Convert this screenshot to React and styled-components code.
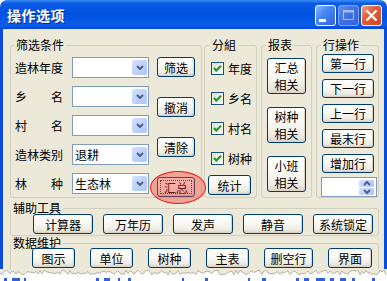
import styled, { createGlobalStyle } from "styled-components";

const Global = createGlobalStyle`
  html, body { margin: 0; padding: 0; background: #fff; }
  body { font-family: "Noto Sans CJK SC", "Liberation Sans", sans-serif; font-size: 12px; }
  * { box-sizing: border-box; }
`;

const FONT = `"Noto Sans CJK SC", "Liberation Sans", sans-serif`;

const S = {
  Window: styled.div`
    width: 387px;
    height: 281px;
    display: flex;
    flex-direction: column;
    overflow: hidden;
  `,
  TitleBar: styled.div`
    height: 29px;
    flex: none;
    display: flex;
    align-items: center;
    padding: 0 5px 0 7px;
    border-radius: 7px 7px 0 0;
    background: linear-gradient(180deg, #3D8BF7 0%, #0A5BE6 12%, #0053E0 50%, #0A5CEA 88%, #0046D0 100%);
  `,
  Title: styled.span`
    flex: 1;
    color: #fff;
    font-weight: bold;
    font-size: 14px;
    letter-spacing: 0.5px;
    text-shadow: 1px 1px 0 #0B2A8A;
    margin-top: 1px;
  `,
  Controls: styled.div`
    display: flex;
    gap: 2px;
    margin-top: 2px;
  `,
  Ctrl: styled.div`
    width: 21px;
    height: 21px;
    border-radius: 3px;
    display: flex;
    align-items: center;
    justify-content: center;
    border: 1px solid ${(p) => (p.$kind === "max" ? "#7FA3EE" : "#fff")};
    background: ${(p) =>
      p.$kind === "close"
        ? "linear-gradient(135deg, #F0A28C 0%, #E0603C 40%, #CC4520 100%)"
        : p.$kind === "max"
        ? "linear-gradient(135deg, #5E8CEB 0%, #3B6BDD 60%, #3464D8 100%)"
        : "linear-gradient(135deg, #8DB5FB 0%, #4A86F3 40%, #2D63DF 100%)"};
  `,
  Body: styled.div`
    height: 240px;
    flex: none;
    display: flex;
    flex-direction: column;
    background: #ECE9D8;
    border-left: 3px solid #0A4BD8;
    border-right: 3px solid #0A4BD8;
    padding: 9px 5px 0 7px;
    overflow: hidden;
  `,
  TopRow: styled.div`
    display: flex;
    height: 160px;
  `,
  Group: styled.fieldset`
    margin: ${(p) => p.$mt || 0}px 0 0 ${(p) => p.$gap || 0}px;
    min-width: 0;
    width: ${(p) => p.$w}px;
    height: ${(p) => (p.$h ? `${p.$h}px` : "auto")};
    border: 1px solid #D0D0BF;
    border-radius: 3px;
    padding: ${(p) => p.$pt || 0}px 0 0 ${(p) => p.$pl}px;
    flex: none;
  `,
  Legend: styled.legend`
    padding: 0 2px;
    margin-left: ${(p) => p.$ml}px;
    line-height: 14px;
    font-size: 12px;
    color: #000;
  `,
  FilterBody: styled.div`
    display: flex;
    gap: 8px;
  `,
  Rows: styled.div`
    display: flex;
    flex-direction: column;
    gap: 8px;
  `,
  Row: styled.div`
    display: flex;
    align-items: center;
    height: 21px;
  `,
  Label: styled.span`
    width: 48px;
    margin-right: 9px;
    display: flex;
    justify-content: space-between;
    font-size: 12px;
  `,
  Combo: styled.div`
    width: 77px;
    height: 21px;
    border: 1px solid #7F9DB9;
    background: #fff;
    display: flex;
    align-items: center;
    padding: 0 1px 0 2px;
    font-size: 12px;
  `,
  ComboText: styled.span`
    flex: 1;
  `,
  DropBtn: styled.span`
    width: 15px;
    height: 15px;
    border-radius: 2px;
    display: flex;
    align-items: center;
    justify-content: center;
    background: linear-gradient(135deg, #D5E1FD 0%, #BCCFF9 60%, #AFC5F5 100%);
  `,
  BtnCol: styled.div`
    position: relative;
    display: flex;
    flex-direction: column;
    justify-content: space-between;
    height: 140px;
  `,
  Btn: styled.button`
    position: relative;
    width: ${(p) => p.$w}px;
    height: ${(p) => p.$h || 20}px;
    padding: 0;
    margin: 0;
    font-family: ${FONT};
    font-size: 12px;
    line-height: ${(p) => (p.$h > 30 ? 17 : 15)}px;
    color: #000;
    border: 1px solid #003C74;
    border-radius: 3px;
    background: linear-gradient(180deg, #FFFFFF 0%, #F9F8F4 45%, #EFEDE6 78%, #DCD7CC 100%);
    box-shadow: inset -1px -1px 0 #D8D1C4;
    display: flex;
    align-items: center;
    justify-content: center;
    text-align: center;
    flex: none;
  `,
  Focus: styled.span`
    position: absolute;
    inset: 2px;
    border: 1px dotted #333;
  `,
  Ring: styled.span`
    position: absolute;
    left: -8px;
    top: -7px;
    width: 56px;
    height: 33px;
    border-radius: 50%;
    border: 1px solid #F01818;
    background: rgba(240, 70, 60, 0.42);
    pointer-events: none;
    z-index: 2;
  `,
  CheckList: styled.div`
    display: flex;
    flex-direction: column;
    gap: 17px;
  `,
  CheckRow: styled.label`
    display: flex;
    align-items: center;
    gap: 4px;
    height: 13px;
    font-size: 12px;
  `,
  Box: styled.span`
    width: 13px;
    height: 13px;
    border: 1px solid #1C5180;
    background: linear-gradient(135deg, #DCDCD4 0%, #F4F4F0 60%, #FFFFFF 100%);
    display: flex;
    align-items: center;
    justify-content: center;
  `,
  Stat: styled.div`
    margin: 10px 0 0 -3px;
  `,
  Stack: styled.div`
    display: flex;
    flex-direction: column;
    gap: ${(p) => p.$gap}px;
    margin-top: ${(p) => p.$mt || 0}px;
  `,
  Spin: styled.div`
    width: 56px;
    height: 20px;
    margin-left: -1px;
    border: 1px solid #7F9DB9;
    background: #fff;
    display: flex;
    justify-content: flex-end;
    padding: 2px 2px 1px 0;
  `,
  SpinArrows: styled.div`
    width: 15px;
    display: flex;
    flex-direction: column;
    gap: 1px;
  `,
  SpinBtn: styled.span`
    flex: 1;
    border-radius: 1px;
    display: flex;
    align-items: center;
    justify-content: center;
    background: linear-gradient(135deg, #D5E1FD 0%, #BCCFF9 60%, #AFC5F5 100%);
  `,
  BtnRow: styled.div`
    display: flex;
    gap: ${(p) => p.$gap}px;
    margin-top: ${(p) => p.$mt}px;
  `,
  Torn: styled.svg`
    display: block;
    flex: none;
  `,
};

const Chevron = ({ up }) => (
  <svg width="8" height="5" viewBox="0 0 8 5">
    <path d={up ? "M1 4 L4 1 L7 4" : "M1 1 L4 4 L7 1"} fill="none" stroke="#4D6185" strokeWidth="2" />
  </svg>
);

const Check = () => (
  <svg width="9" height="9" viewBox="0 0 9 9">
    <path d="M1 4 L3.3 6.6 L8 1.8" fill="none" stroke="#21A121" strokeWidth="2.2" />
  </svg>
);

const Combo = ({ value }) => (
  <S.Combo>
    <S.ComboText>{value}</S.ComboText>
    <S.DropBtn>
      <Chevron />
    </S.DropBtn>
  </S.Combo>
);

const Spread = ({ a, b }) => (
  <S.Label>
    <span>{a}</span>
    <span>{b}</span>
  </S.Label>
);

const tornEdge = (() => {
  let seed = 11;
  const rnd = () => {
    seed = (seed * 9301 + 49297) % 233280;
    return seed / 233280;
  };
  const pts = [];
  for (let x = 0; x <= 387; x += 2) pts.push([x, 1 + rnd() * 5]);
  const line = pts.map(([x, y]) => `${x},${y.toFixed(1)}`).join(" ");
  return { line, poly: `0,0 ${line} 387,0` };
})();

const specks = [
  [4, 3], [12, 8], [24, 2], [96, 3], [104, 6], [118, 2], [128, 3], [182, 2],
  [205, 3], [248, 2], [262, 4], [296, 3], [304, 5], [316, 9], [330, 4], [340, 6], [352, 3], [372, 3],
];

export default function App() {
  return (
    <>
      <Global />
      <S.Window>
        <S.TitleBar>
          <S.Title>操作选项</S.Title>
          <S.Controls>
            <S.Ctrl $kind="min">
              <svg width="19" height="19" viewBox="0 0 19 19">
                <rect x="3" y="13" width="7" height="3" fill="#fff" />
              </svg>
            </S.Ctrl>
            <S.Ctrl $kind="max">
              <svg width="19" height="19" viewBox="0 0 19 19">
                <rect x="4.5" y="4.5" width="10" height="9" fill="none" stroke="#9DBBF4" strokeWidth="1" />
                <rect x="4" y="4" width="11" height="2.5" fill="#9DBBF4" />
              </svg>
            </S.Ctrl>
            <S.Ctrl $kind="close">
              <svg width="19" height="19" viewBox="0 0 19 19">
                <path d="M4.5 4.5 L14.5 14.5 M14.5 4.5 L4.5 14.5" stroke="#fff" strokeWidth="2.4" />
              </svg>
            </S.Ctrl>
          </S.Controls>
        </S.TitleBar>

        <S.Body>
          <S.TopRow>
            <S.Group $w={192} $pl={4} $pt={5}>
              <S.Legend $ml={-1}>筛选条件</S.Legend>
              <S.FilterBody>
                <S.Rows>
                  <S.Row>
                    <S.Label>造林年度</S.Label>
                    <Combo />
                  </S.Row>
                  <S.Row>
                    <Spread a="乡" b="名" />
                    <Combo />
                  </S.Row>
                  <S.Row>
                    <Spread a="村" b="名" />
                    <Combo />
                  </S.Row>
                  <S.Row>
                    <S.Label>造林类别</S.Label>
                    <Combo value="退耕" />
                  </S.Row>
                  <S.Row>
                    <Spread a="林" b="种" />
                    <Combo value="生态林" />
                  </S.Row>
                </S.Rows>
                <S.BtnCol>
                  <S.Btn $w={38}>筛选</S.Btn>
                  <S.Btn $w={38}>撤消</S.Btn>
                  <S.Btn $w={38}>清除</S.Btn>
                  <S.Btn $w={38}>
                    <S.Focus />
                    汇总
                    <S.Ring />
                  </S.Btn>
                </S.BtnCol>
              </S.FilterBody>
            </S.Group>

            <S.Group $w={53} $gap={2} $pl={6} $pt={10}>
              <S.Legend $ml={-1}>分組</S.Legend>
              <S.CheckList>
                {["年度", "乡名", "村名", "树种"].map((t) => (
                  <S.CheckRow key={t}>
                    <S.Box>
                      <Check />
                    </S.Box>
                    {t}
                  </S.CheckRow>
                ))}
              </S.CheckList>
              <S.Stat>
                <S.Btn $w={43}>统计</S.Btn>
              </S.Stat>
            </S.Group>

            <S.Group $w={51} $gap={4} $pl={5} $pt={6}>
              <S.Legend $ml={-1}>报表</S.Legend>
              <S.Stack $gap={13}>
                <S.Btn $w={39} $h={36}>汇总<br />相关</S.Btn>
                <S.Btn $w={39} $h={36}>树种<br />相关</S.Btn>
                <S.Btn $w={39} $h={36}>小班<br />相关</S.Btn>
              </S.Stack>
            </S.Group>

            <S.Group $w={63} $gap={4} $pl={5} $pt={2}>
              <S.Legend $ml={-1}>行操作</S.Legend>
              <S.Stack $gap={6}>
                {["第一行", "下一行", "上一行", "最末行", "增加行"].map((t) => (
                  <S.Btn key={t} $w={52} $h={19}>
                    {t}
                  </S.Btn>
                ))}
              </S.Stack>
              <S.Stack $gap={0} $mt={4}>
                <S.Spin>
                  <S.SpinArrows>
                    <S.SpinBtn>
                      <Chevron up />
                    </S.SpinBtn>
                    <S.SpinBtn>
                      <Chevron />
                    </S.SpinBtn>
                  </S.SpinArrows>
                </S.Spin>
              </S.Stack>
            </S.Group>
          </S.TopRow>

          <S.Group $w={369} $h={35} $pl={22} $mt={3}>
            <S.Legend $ml={-22}>辅助工具</S.Legend>
            <S.BtnRow $gap={10} $mt={-1}>
              {["计算器", "万年历", "发声", "静音", "系统锁定"].map((t) => (
                <S.Btn key={t} $w={60}>
                  {t}
                </S.Btn>
              ))}
            </S.BtnRow>
          </S.Group>

          <S.Group $w={369} $h={50} $pl={21}>
            <S.Legend $ml={-21}>数据维护</S.Legend>
            <S.BtnRow $gap={15} $mt={-2}>
              {[
                ["图示", 43],
                ["单位", 43],
                ["树种", 43],
                ["主表", 43],
                ["删空行", 49],
                ["界面", 44],
              ].map(([t, w]) => (
                <S.Btn key={t} $w={w}>
                  {t}
                </S.Btn>
              ))}
            </S.BtnRow>
          </S.Group>
        </S.Body>

        <S.Torn width="387" height="12" viewBox="0 0 387 12">
          <polygon points={tornEdge.poly} fill="#ECE9D8" />
          <polyline points={tornEdge.line} fill="none" stroke="#B5B3A8" strokeWidth="1" />
          {specks.map(([x, w]) => (
            <rect key={x} x={x} y="9" width={w} height="3" fill="#2F62D8" />
          ))}
        </S.Torn>
      </S.Window>
    </>
  );
}
